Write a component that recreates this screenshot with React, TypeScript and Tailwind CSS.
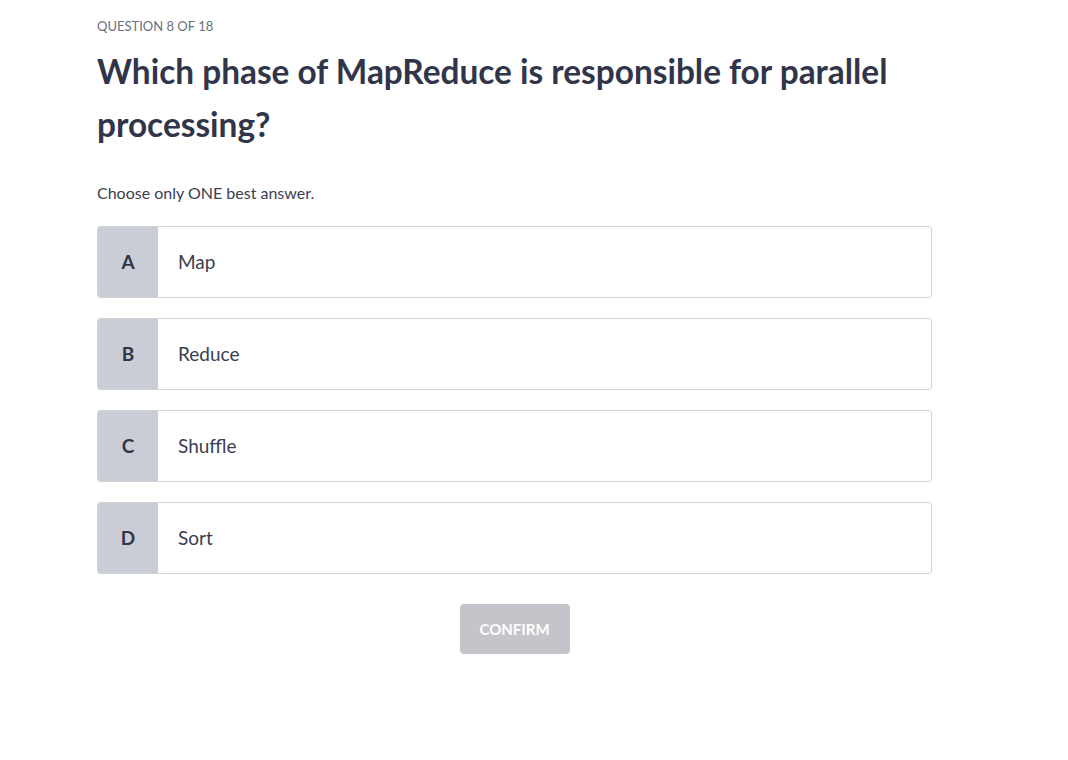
const options = [
  { letter: 'A', text: 'Map' },
  { letter: 'B', text: 'Reduce' },
  { letter: 'C', text: 'Shuffle' },
  { letter: 'D', text: 'Sort' },
];

export default function App() {
  return (
    <div className="min-h-[760px] bg-white font-['Lato','Liberation_Sans',sans-serif] text-[#333749]">
      <div className="ml-[97px] w-[835px] pt-[16px]">
        <div className="text-[13px] leading-[20px] text-[#6b6f80]">QUESTION 8 OF 18</div>
        <h1 className="mt-[9px] text-[33.4px] font-bold leading-[53px] text-[#31354a]">
          Which phase of MapReduce is responsible for parallel processing?
        </h1>
        <p className="mt-[31px] text-[16px] leading-[22px] text-[#3a3e50]">Choose only ONE best answer.</p>
        <div className="mt-[22px] flex flex-col gap-[20px]">
          {options.map((o) => (
            <button
              key={o.letter}
              className="flex h-[72px] w-full overflow-hidden rounded-[3px] border border-[#d3d4da] bg-white text-left"
            >
              <span className="flex w-[60px] shrink-0 items-center justify-center bg-[#cbcdd6] text-[19px] font-bold text-[#31354a]">
                {o.letter}
              </span>
              <span className="flex items-center pl-[20px] text-[19px] text-[#3a3e50]">{o.text}</span>
            </button>
          ))}
        </div>
        <div className="mt-[30px] flex justify-center">
          <button className="h-[50px] w-[110px] rounded-[4px] bg-[#c4c5ca] text-[15px] font-bold text-white">
            CONFIRM
          </button>
        </div>
      </div>
    </div>
  );
}
